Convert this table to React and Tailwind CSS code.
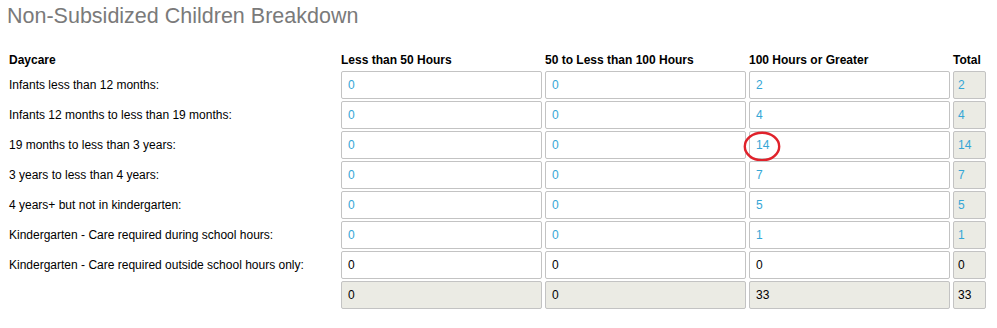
import React from "react";

const rows = [
  { label: "Infants less than 12 months:", vals: ["0", "0", "2", "2"], blue: true },
  { label: "Infants 12 months to less than 19 months:", vals: ["0", "0", "4", "4"], blue: true },
  { label: "19 months to less than 3 years:", vals: ["0", "0", "14", "14"], blue: true, circle: true },
  { label: "3 years to less than 4 years:", vals: ["0", "0", "7", "7"], blue: true },
  { label: "4 years+ but not in kindergarten:", vals: ["0", "0", "5", "5"], blue: true },
  { label: "Kindergarten - Care required during school hours:", vals: ["0", "0", "1", "1"], blue: true },
  { label: "Kindergarten - Care required outside school hours only:", vals: ["0", "0", "0", "0"], blue: false },
];

function Box({ value, blue, readonly, total, circle }) {
  return (
    <div
      className={`relative h-[28px] border border-[#c3c3c3] rounded-[2px] flex items-center text-[12px] ${
        total ? "pl-[4px]" : "pl-[6px]"
      } ${readonly ? "bg-[#ebebe4]" : "bg-white"} ${blue ? "text-[#35a6d6]" : "text-black"}`}
    >
      {value}
      {circle && (
        <svg
          className="absolute left-[-7px] top-[-1px]"
          width="38"
          height="31"
          viewBox="0 0 38 31"
        >
          <ellipse cx="19" cy="15.5" rx="17.2" ry="13.8" fill="none" stroke="#e0222b" strokeWidth="2.4" />
        </svg>
      )}
    </div>
  );
}

export default function App() {
  return (
    <div className="w-[997px] h-[328px] bg-white font-['Liberation_Sans',Arial,sans-serif] text-black overflow-hidden">
      <div className="pl-[7px] pt-[4px] h-[29px] text-[21.5px] leading-[25px] text-[#7a7a7a]">
        Non-Subsidized Children Breakdown
      </div>
      <div className="mt-[21px] grid grid-cols-[338px_201px_201px_201px_33px] gap-x-[3px] gap-y-[2px]">
        <div className="h-[19px] flex items-end pb-[2px] pl-[9px] text-[12px] leading-[14px] font-bold">Daycare</div>
        <div className="h-[19px] flex items-end pb-[2px] text-[12px] leading-[14px] font-bold">Less than 50 Hours</div>
        <div className="h-[19px] flex items-end pb-[2px] text-[12px] leading-[14px] font-bold">50 to Less than 100 Hours</div>
        <div className="h-[19px] flex items-end pb-[2px] text-[12px] leading-[14px] font-bold">100 Hours or Greater</div>
        <div className="h-[19px] flex items-end pb-[2px] text-[12px] leading-[14px] font-bold">Total</div>
        {rows.map((r, i) => (
          <React.Fragment key={i}>
            <div className="h-[28px] flex items-center pl-[9px] text-[12px]">{r.label}</div>
            <Box value={r.vals[0]} blue={r.blue} />
            <Box value={r.vals[1]} blue={r.blue} />
            <Box value={r.vals[2]} blue={r.blue} circle={r.circle} />
            <Box value={r.vals[3]} blue={r.blue} readonly total />
          </React.Fragment>
        ))}
        <div className="h-[28px]" />
        <Box value="0" readonly />
        <Box value="0" readonly />
        <Box value="33" readonly />
        <Box value="33" readonly total />
      </div>
    </div>
  );
}
